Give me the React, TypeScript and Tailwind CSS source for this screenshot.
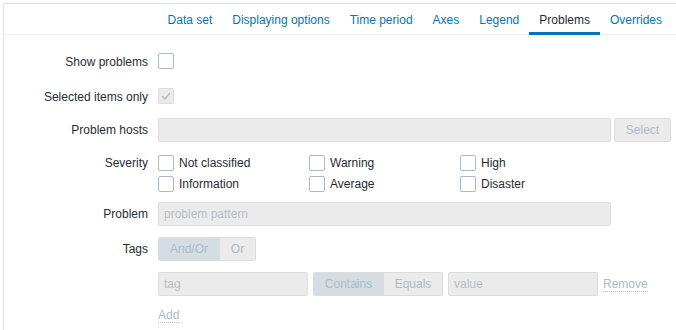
import React from "react";

const tabs = ["Data set", "Displaying options", "Time period", "Axes", "Legend", "Problems", "Overrides"];

function Box({ checked, disabled }: { checked?: boolean; disabled?: boolean }) {
  return (
    <span
      className={`flex h-4 w-4 shrink-0 items-center justify-center rounded-[2px] border ${
        disabled ? "border-[#dcdcdc] bg-[#ebebeb]" : "border-[#acbbc7] bg-white"
      }`}
    >
      {checked && (
        <svg width="10" height="8" viewBox="0 0 10 8">
          <path d="M1 4l3 3 5-6" fill="none" stroke="#b4bfc7" strokeWidth="1.6" />
        </svg>
      )}
    </span>
  );
}

function Sev({ label }: { label: string }) {
  return (
    <label className="flex h-[21px] items-center gap-[5px]">
      <Box />
      <span>{label}</span>
    </label>
  );
}

export default function App() {
  return (
    <div
      className="h-[330px] w-[676px] overflow-hidden bg-white pl-[3px] pt-[3px] text-[12px] text-[#1f2c33]"
      style={{ fontFamily: '"Liberation Sans", Arial, sans-serif' }}
    >
      <div className="h-full border-l border-t border-[#e4e4e4]">
        {/* tabs */}
        <div className="flex h-[31px] justify-end border-b border-[#ebeef0] pr-[4px]">
          {tabs.map((t) => {
            const active = t === "Problems";
            return (
              <div
                key={t}
                className={`relative flex items-center px-[10px] pt-[1px] ${
                  active ? "text-[#1f2c33]" : "text-[#0275b8]"
                }`}
              >
                {t}
                {active && <span className="absolute bottom-[-1px] left-0 right-0 h-[3px] bg-[#0275b8]" />}
              </div>
            );
          })}
        </div>

        <div className="flex flex-col pt-[14px]">
          <div className="grid h-[24px] grid-cols-[144px_1fr] items-center gap-x-[10px]">
            <div className="pt-[1px] text-right">Show problems</div>
            <Box />
          </div>

          <div className="mt-[11px] grid h-[24px] grid-cols-[144px_1fr] items-center gap-x-[10px]">
            <div className="pt-[1px] text-right">Selected items only</div>
            <Box checked disabled />
          </div>

          <div className="mt-[10px] grid h-[24px] grid-cols-[144px_1fr] items-center gap-x-[10px]">
            <div className="text-right">Problem hosts</div>
            <div className="flex items-center gap-[3px]">
              <div className="h-[24px] w-[453px] rounded-[2px] border border-[#dcdcdc] bg-[#ebebeb]" />
              <div className="flex h-[24px] w-[57px] items-center justify-center rounded-[2px] border border-[#dcdcdc] bg-[#ebebeb] text-[#acbbc7]">
                Select
              </div>
            </div>
          </div>

          <div className="mt-[10px] grid grid-cols-[144px_1fr] gap-x-[10px]">
            <div className="flex h-[21px] items-center justify-end">Severity</div>
            <div className="grid w-[453px] grid-cols-[151px_151px_151px]">
              <Sev label="Not classified" />
              <Sev label="Warning" />
              <Sev label="High" />
              <Sev label="Information" />
              <Sev label="Average" />
              <Sev label="Disaster" />
            </div>
          </div>

          <div className="mt-[8px] grid h-[24px] grid-cols-[144px_1fr] items-center gap-x-[10px]">
            <div className="text-right">Problem</div>
            <div className="flex h-[24px] w-[453px] items-center rounded-[2px] border border-[#dcdcdc] bg-[#ebebeb] px-[5px] text-[#b8bfc4]">
              problem pattern
            </div>
          </div>

          <div className="mt-[11px] grid h-[24px] grid-cols-[144px_1fr] items-center gap-x-[10px]">
            <div className="text-right">Tags</div>
            <div className="flex h-[24px] w-[98px] overflow-hidden rounded-[2px] border border-[#dcdcdc] text-[#acbbc7]">
              <div className="flex w-[61px] items-center justify-center border-r border-[#dcdcdc] bg-[#d5dde2]">And/Or</div>
              <div className="flex flex-1 items-center justify-center bg-[#ebebeb]">Or</div>
            </div>
          </div>

          <div className="mt-[11px] grid h-[24px] grid-cols-[144px_1fr] items-center gap-x-[10px]">
            <div />
            <div className="flex items-center gap-[5px] text-[#acbbc7]">
              <div className="flex h-[24px] w-[150px] items-center rounded-[2px] border border-[#dcdcdc] bg-[#ebebeb] px-[5px] text-[#b8bfc4]">
                tag
              </div>
              <div className="flex h-[24px] w-[130px] overflow-hidden rounded-[2px] border border-[#dcdcdc]">
                <div className="flex w-[70px] items-center justify-center border-r border-[#dcdcdc] bg-[#d5dde2]">Contains</div>
                <div className="flex flex-1 items-center justify-center bg-[#ebebeb]">Equals</div>
              </div>
              <div className="flex h-[24px] w-[150px] items-center rounded-[2px] border border-[#dcdcdc] bg-[#ebebeb] px-[5px] text-[#b8bfc4]">
                value
              </div>
              <span className="border-b border-dotted border-[#acbbc7] leading-[14px]">Remove</span>
            </div>
          </div>

          <div className="mt-[10px] grid h-[16px] grid-cols-[144px_1fr] items-center gap-x-[10px]">
            <div />
            <div>
              <span className="border-b border-dotted border-[#acbbc7] leading-[14px] text-[#acbbc7]">Add</span>
            </div>
          </div>
        </div>
      </div>
    </div>
  );
}
